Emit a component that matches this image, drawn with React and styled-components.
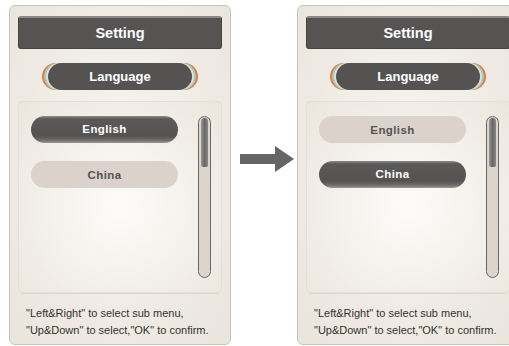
import React from "react";
import styled, { createGlobalStyle } from "styled-components";

const GlobalStyle = createGlobalStyle`
  html, body {
    margin: 0;
    padding: 0;
    background: #ffffff;
    overflow: hidden;
  }
  body {
    font-family: "Liberation Sans", Arial, sans-serif;
  }
`;

const Page = styled.div`
  display: flex;
  align-items: flex-start;
  padding: 5px 0 0 9px;
  width: 509px;
  height: 346px;
  box-sizing: border-box;
`;

const Panel = styled.div`
  flex: 0 0 auto;
  width: 222px;
  height: 340px;
  box-sizing: border-box;
  border: 1px solid #c9c3bb;
  border-radius: 6px;
  background: radial-gradient(ellipse at 50% 45%, #f7f5f1 0%, #efebe4 60%, #e9e4dc 100%);
  padding: 10px 8px 0;
  display: flex;
  flex-direction: column;
`;

const TitleBar = styled.div`
  height: 33px;
  box-sizing: border-box;
  border-radius: 3px;
  background: #555452;
  border: 1px solid #444341;
  border-top: 2px solid #8a8987;
  color: #ffffff;
  font-weight: bold;
  font-size: 14.5px;
  display: flex;
  align-items: center;
  justify-content: center;
`;

const TabRow = styled.div`
  display: flex;
  justify-content: center;
  margin-top: 14px;
`;

const Tab = styled.div`
  width: 144px;
  height: 27px;
  border-radius: 14px;
  background: #545351;
  color: #ffffff;
  font-weight: bold;
  font-size: 13px;
  display: flex;
  align-items: center;
  justify-content: center;
  box-shadow:
    -2px 0 0 #e6ddd2, 2px 0 0 #e6ddd2,
    -4px 0 0 #93d0c2, 4px 0 0 #93d0c2,
    -6px 0 0 #ec7a3e, 6px 0 0 #ec7a3e;
`;

const ListBox = styled.div`
  margin-top: 11px;
  height: 192px;
  box-sizing: border-box;
  border: 1px solid #e4dfd7;
  border-radius: 4px;
  background: radial-gradient(ellipse at 50% 55%, #fdfcfa 0%, #f3f0ea 55%, #ebe6dd 100%);
  box-shadow: 0 4px 0 -3px #dcd6cd;
  display: grid;
  grid-template-columns: 1fr auto;
  padding: 14px 10px 14px 12px;
`;

const Options = styled.div`
  display: flex;
  flex-direction: column;
  gap: 18px;
`;

const Option = styled.div`
  width: 147px;
  height: 27px;
  box-sizing: border-box;
  border-radius: 14px;
  display: flex;
  align-items: center;
  justify-content: center;
  font-weight: bold;
  font-size: 11.5px;
  letter-spacing: 0.4px;
  color: ${(p) => (p.active ? "#ffffff" : "#555351")};
  background: ${(p) =>
    p.active
      ? "linear-gradient(#8c8b89 0px, #5a5957 3px, #545351 20px, #6d6c6a 24px, #9a9896 27px)"
      : "#dbd2cc"};
  padding-bottom: ${(p) => (p.active ? "2px" : "0")};
`;

const ScrollTrack = styled.div`
  width: 13px;
  height: 162px;
  box-sizing: border-box;
  border: 1px solid #6a6866;
  border-radius: 7px;
  background: #dcd3cc;
  padding: 1px 2px;
`;

const ScrollThumb = styled.div`
  height: 49px;
  border-radius: 4px 4px 2px 2px;
  background: linear-gradient(90deg, #9a9896, #6a6866 50%, #8a8886);
`;

const Hint = styled.div`
  padding: 12px 0 0 8px;
  font-size: 11px;
  line-height: 17px;
  color: #333230;
  white-space: nowrap;
`;

const ArrowBox = styled.div`
  flex: 0 0 66px;
  height: 308px;
  display: flex;
  align-items: center;
  justify-content: center;
  padding-left: 6px;
  box-sizing: border-box;
`;

function Arrow() {
  return (
    <svg width="54" height="26" viewBox="0 0 54 26">
      <path d="M0 8 H35 V0 L54 13 L35 26 V18 H0 Z" fill="#666563" />
    </svg>
  );
}

function SettingPanel({ selected }) {
  const items = ["English", "China"];
  return (
    <Panel>
      <TitleBar>Setting</TitleBar>
      <TabRow>
        <Tab>Language</Tab>
      </TabRow>
      <ListBox>
        <Options>
          {items.map((item) => (
            <Option key={item} active={item === selected}>
              {item}
            </Option>
          ))}
        </Options>
        <ScrollTrack>
          <ScrollThumb />
        </ScrollTrack>
      </ListBox>
      <Hint>
        "Left&amp;Right" to select sub menu,
        <br />
        "Up&amp;Down" to select,"OK" to confirm.
      </Hint>
    </Panel>
  );
}

export default function App() {
  return (
    <>
      <GlobalStyle />
      <Page>
        <SettingPanel selected="English" />
        <ArrowBox>
          <Arrow />
        </ArrowBox>
        <SettingPanel selected="China" />
      </Page>
    </>
  );
}
